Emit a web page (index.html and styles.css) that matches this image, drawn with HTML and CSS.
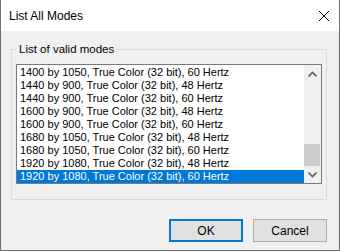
FILE: index.html
```html
<!DOCTYPE html>
<html lang="en">
<head>
  <meta charset="UTF-8" />
  <title>List All Modes</title>
  <link rel="stylesheet" href="styles.css">
</head>
<body>
  <div class="window">
    <div class="title-bar">
      <span class="title">List All Modes</span>
      <svg class="close" width="12" height="12" viewBox="0 0 12 12">
        <path d="M1 1 L11 11 M11 1 L1 11" stroke="#000" stroke-width="1" fill="none" />
      </svg>
    </div>

    <div class="content">
      <div class="group">
        <span class="group-label">List of valid modes</span>
        <div class="listbox">
          <ul class="items">
            <li>1400 by 1050, True Color (32 bit), 60 Hertz</li>
            <li>1440 by 900, True Color (32 bit), 48 Hertz</li>
            <li>1440 by 900, True Color (32 bit), 60 Hertz</li>
            <li>1600 by 900, True Color (32 bit), 48 Hertz</li>
            <li>1600 by 900, True Color (32 bit), 60 Hertz</li>
            <li>1680 by 1050, True Color (32 bit), 48 Hertz</li>
            <li>1680 by 1050, True Color (32 bit), 60 Hertz</li>
            <li>1920 by 1080, True Color (32 bit), 48 Hertz</li>
            <li class="selected">1920 by 1080, True Color (32 bit), 60 Hertz</li>
          </ul>
          <div class="scrollbar">
            <div class="arrow">
              <svg width="9" height="6" viewBox="0 0 9 6"><path d="M0.5 5.5 L4.5 1.5 L8.5 5.5" stroke="#606060" stroke-width="1.6" fill="none" /></svg>
            </div>
            <div class="track">
              <div class="thumb"></div>
            </div>
            <div class="arrow">
              <svg width="9" height="6" viewBox="0 0 9 6"><path d="M0.5 0.5 L4.5 4.5 L8.5 0.5" stroke="#606060" stroke-width="1.6" fill="none" /></svg>
            </div>
          </div>
        </div>
      </div>

      <div class="btn-row">
        <button class="btn default">OK</button>
        <button class="btn">Cancel</button>
      </div>
    </div>
  </div>
</body>
</html>
```

FILE: styles.css
```css
* {
  box-sizing: border-box;
}
body {
  margin: 0;
  font-family: 'Liberation Sans', Arial, sans-serif;
  font-size: 12px;
  color: #000;
}

/* Dialog frame */
.window {
  width: 340px;
  height: 251px;
  background: #f0f0f0;
  border: 1px solid #6f6f6f;
  border-top: none;
  display: flex;
  flex-direction: column;
}

/* Title bar */
.title-bar {
  height: 31px;
  background: #fff;
  display: flex;
  align-items: center;
  justify-content: space-between;
  padding: 0 9px 0 8px;
}
.close {
  display: block;
}

.content {
  padding: 18px 12px 0 10px;
}

/* Group box */
.group {
  position: relative;
  border: 1px solid #dcdcdc;
  padding: 14px 4px 15px 4px;
}
.group-label {
  position: absolute;
  top: -8px;
  left: 5px;
  padding: 0 2px;
  line-height: 15px;
  font-size: 11.5px;
  background: #f0f0f0;
}

/* List box */
.listbox {
  display: flex;
  height: 120px;
  background: #fff;
  border: 1px solid #7a7a7a;
}
.items {
  list-style: none;
  margin: 0;
  padding: 1px 0 0 0;
  flex: 1;
  font-size: 11px;
  overflow: hidden;
}
.items li {
  height: 13px;
  line-height: 13px;
  padding-left: 3px;
  white-space: nowrap;
}
.items li.selected {
  background: #0078d7;
  color: #fff;
}

/* Scrollbar */
.scrollbar {
  width: 17px;
  background: #f0f0f0;
  display: flex;
  flex-direction: column;
}
.arrow {
  height: 17px;
  display: flex;
  align-items: center;
  justify-content: center;
}
.track {
  flex: 1;
  display: flex;
  flex-direction: column;
  justify-content: flex-end;
}
.thumb {
  height: 22px;
  margin: 0 1px 0 0;
  background: #cdcdcd;
}

/* Buttons */
.btn-row {
  display: flex;
  justify-content: flex-end;
  gap: 10px;
  margin-top: 19px;
}
.btn {
  width: 74px;
  height: 23px;
  padding: 0;
  font-family: inherit;
  font-size: 12px;
  color: #000;
  background: #e1e1e1;
  border: 1px solid #adadad;
}
.btn.default {
  border: 2px solid #0078d7;
}
```
